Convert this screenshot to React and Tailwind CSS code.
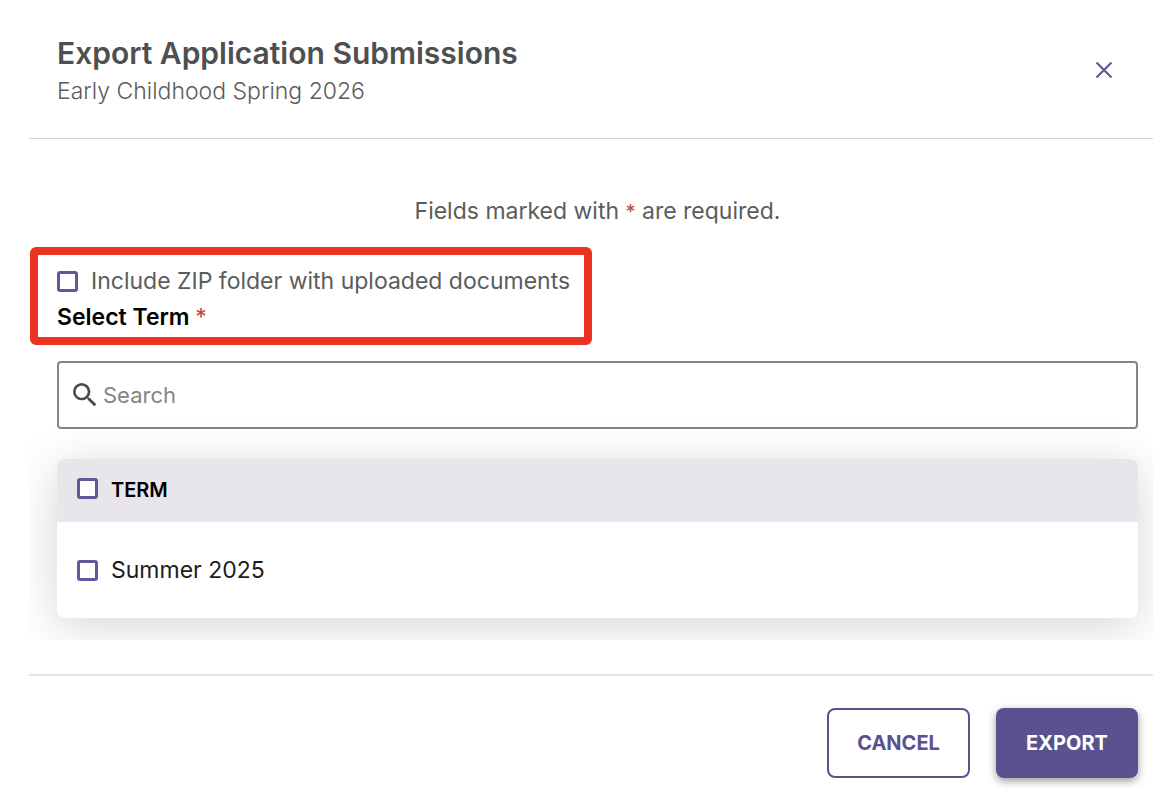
import React, { useState } from "react";
import { MdSearch } from "react-icons/md";

const terms = [{ id: "summer-2025", name: "Summer 2025" }];

const Checkbox = (props) => (
  <input
    type="checkbox"
    className="block size-[21px] shrink-0 appearance-none rounded-[3px] border-3 border-[#5f5899] bg-white checked:bg-[#5f5899]"
    {...props}
  />
);

const App = () => {
  const [includeZip, setIncludeZip] = useState(false);
  const [search, setSearch] = useState("");
  const [selected, setSelected] = useState([]);

  const visibleTerms = terms.filter((term) =>
    term.name.toLowerCase().includes(search.toLowerCase())
  );
  const allSelected = selected.length === terms.length;

  const toggleTerm = (id) => {
    setSelected((prev) =>
      prev.includes(id) ? prev.filter((item) => item !== id) : [...prev, id]
    );
  };

  return (
    <div
      role="dialog"
      aria-labelledby="export-title"
      className="min-h-screen bg-white pr-[13px] pl-[29px] font-['Inter',sans-serif] text-[23px] text-[#5c5c5c]"
    >
      <header className="flex items-center justify-between border-b border-[#d0d0d0] pt-8 pr-9 pb-[30px] pl-7">
        <div>
          <h1 id="export-title" className="text-[30px] leading-[42px] font-semibold text-[#4f4f4f]">
            Export Application Submissions
          </h1>
          <p className="leading-[34px] font-light">Early Childhood Spring 2026</p>
        </div>
        <button type="button" aria-label="Close" className="flex size-[26px] items-center justify-center">
          <svg viewBox="0 0 16 16" className="size-4" fill="none" stroke="#5f5899" strokeWidth="2.2">
            <path d="M0.5 0.5 15.5 15.5M15.5 0.5 0.5 15.5" />
          </svg>
        </button>
      </header>

      <main className="overflow-hidden pr-[15px] pb-[22px] pl-7">
        <p className="pt-14 text-center leading-8">
          Fields marked with <span className="text-xl text-[#c0453a]">*</span> are required.
        </p>

        <div className="mt-5 -ml-[27px] w-fit rounded-md border-8 border-[#eb3323] pt-2 pr-[14px] pb-0.5 pl-[19px]">
          <label className="flex items-center gap-[13px] leading-9">
            <Checkbox checked={includeZip} onChange={(e) => setIncludeZip(e.target.checked)} />
            Include ZIP folder with uploaded documents
          </label>
          <label htmlFor="term-search" className="block leading-9 font-semibold text-black">
            Select Term <span className="font-normal text-[#c0453a]">*</span>
          </label>
        </div>

        <div className="mt-4 flex h-[68px] items-center rounded-sm border-2 border-[#858585] px-2.5">
          <MdSearch className="size-8 shrink-0 text-[#4a4a4a]" />
          <input
            id="term-search"
            type="text"
            placeholder="Search"
            value={search}
            onChange={(e) => setSearch(e.target.value)}
            className="ml-0.5 min-w-0 flex-1 text-[22px] outline-none placeholder:text-[#858585]"
          />
        </div>

        <div className="mt-[30px] overflow-hidden rounded-lg bg-white shadow-[0_8px_48px_rgba(0,0,0,0.17)]">
          <table className="w-full text-left text-[#1c1c1c]">
            <thead className="bg-[#e8e6eb]">
              <tr className="h-[63px]">
                <th className="w-[54px] pb-1 pl-5">
                  <Checkbox
                    aria-label="Select all terms"
                    checked={allSelected}
                    onChange={() => setSelected(allSelected ? [] : terms.map((term) => term.id))}
                  />
                </th>
                <th className="pb-0.5 text-xl font-semibold text-black">TERM</th>
              </tr>
            </thead>
            <tbody>
              {visibleTerms.map((term) => (
                <tr key={term.id} className="h-24">
                  <td className="pl-5">
                    <Checkbox
                      id={term.id}
                      checked={selected.includes(term.id)}
                      onChange={() => toggleTerm(term.id)}
                    />
                  </td>
                  <td>
                    <label htmlFor={term.id}>{term.name}</label>
                  </td>
                </tr>
              ))}
            </tbody>
          </table>
        </div>
      </main>

      <footer className="mt-[34px] flex justify-end gap-[26px] border-t-2 border-[#e2e2e2] pt-8 pr-[15px] pb-8">
        <button
          type="button"
          className="h-[70px] w-[143px] rounded-lg border-2 border-[#59528f] text-xl font-bold text-[#59528f]"
        >
          CANCEL
        </button>
        <button
          type="button"
          className="h-[70px] w-[142px] rounded-lg bg-[#59528f] text-xl font-bold text-white shadow-[0_3px_8px_rgba(0,0,0,0.4)]"
        >
          EXPORT
        </button>
      </footer>
    </div>
  );
};

export default App;
